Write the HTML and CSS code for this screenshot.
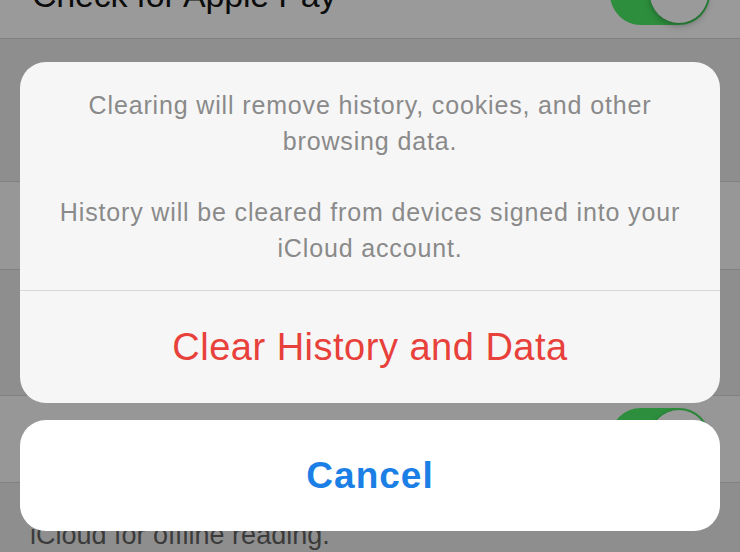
FILE: index.html
```html
<!DOCTYPE html>
<html>
<head>
<meta charset="utf-8">
<link rel="stylesheet" href="styles.css">
</head>
<body>
<div class="screen">
  <div class="settings">
    <div class="row row-first">
      <span class="row-label">Check for Apple Pay</span>
      <span class="toggle"><span class="knob"></span></span>
    </div>
    <div class="gap gap-a"></div>
    <div class="row row-plain"></div>
    <div class="gap gap-b"></div>
    <div class="row row-toggle">
      <span class="row-label"></span>
      <span class="toggle"><span class="knob"></span></span>
    </div>
    <div class="footer">iCloud for offline reading.</div>
  </div>

  <div class="sheet">
    <div class="card card-main">
      <div class="message">
        <p>Clearing will remove history, cookies, and other browsing data.</p>
        <p>History will be cleared from devices signed into your iCloud account.</p>
      </div>
      <div class="action action-destructive">Clear History and Data</div>
    </div>
    <div class="card card-cancel">
      <div class="action action-cancel">Cancel</div>
    </div>
  </div>
</div>
</body>
</html>
```

FILE: styles.css
```css
* { box-sizing: border-box; }
html, body { margin: 0; padding: 0; }
body {
  font-family: "Liberation Sans", Arial, sans-serif;
  background: #8e8e8e;
}
.screen {
  position: relative;
  width: 740px;
  height: 552px;
  overflow: hidden;
  background: #8e8e8e;
}
.settings {
  display: flex;
  flex-direction: column;
  margin-top: -50px;
}
.row {
  height: 88px;
  background: #9a9a9a;
  display: flex;
  align-items: center;
  justify-content: space-between;
  padding: 0 30px 0 32px;
  flex-shrink: 0;
}
.row-first { border-bottom: 1px solid #818181; height: 89px; }
.row-plain { border-top: 1px solid #818181; border-bottom: 1px solid #818181; height: 89px; background: #979797; }
.row-toggle { border-top: 1px solid #818181; border-bottom: 1px solid #818181; height: 88px; background: #979797; }
.row-label {
  font-size: 34px;
  color: #0c0c0c;
  letter-spacing: -0.2px;
  position: relative;
  top: 1px;
}
.gap { flex-shrink: 0; }
.gap-a { height: 142px; }
.gap-b { height: 125px; }
.toggle {
  width: 100px;
  height: 62px;
  border-radius: 31px;
  background: #2d8e3d;
  position: relative;
  flex-shrink: 0;
}
.knob {
  position: absolute;
  right: 2px;
  top: 2px;
  width: 58px;
  height: 58px;
  border-radius: 50%;
  background: #9a9a9a;
  box-shadow: 0 3px 6px rgba(0,0,0,0.25), 0 0 0 1px rgba(0,0,0,0.04);
}
.footer {
  padding: 37px 30px 0 30px;
  font-size: 27px;
  color: #3b3b3b;
}
.sheet {
  position: absolute;
  left: 20px;
  right: 20px;
  top: 62px;
  display: flex;
  flex-direction: column;
  gap: 17px;
}
.card {
  border-radius: 26px;
  overflow: hidden;
}
.card-main { background: #f6f6f6; }
.card-cancel { background: #ffffff; }
.message {
  padding: 25px 24px 24px;
  border-bottom: 1px solid #d8d8d8;
  text-align: center;
  color: #8a8a8a;
  font-size: 25px;
  letter-spacing: 0.85px;
  line-height: 36px;
}
.message p { margin: 0; }
.message p + p { margin-top: 35px; }
.action {
  display: flex;
  align-items: center;
  justify-content: center;
}
.action-destructive {
  height: 112px;
  color: #e8403a;
  font-size: 38px;
  letter-spacing: 0.5px;
}
.action-cancel {
  height: 111px;
  color: #1b7fe6;
  font-size: 37px;
  font-weight: bold;
  letter-spacing: 1px;
}
```
